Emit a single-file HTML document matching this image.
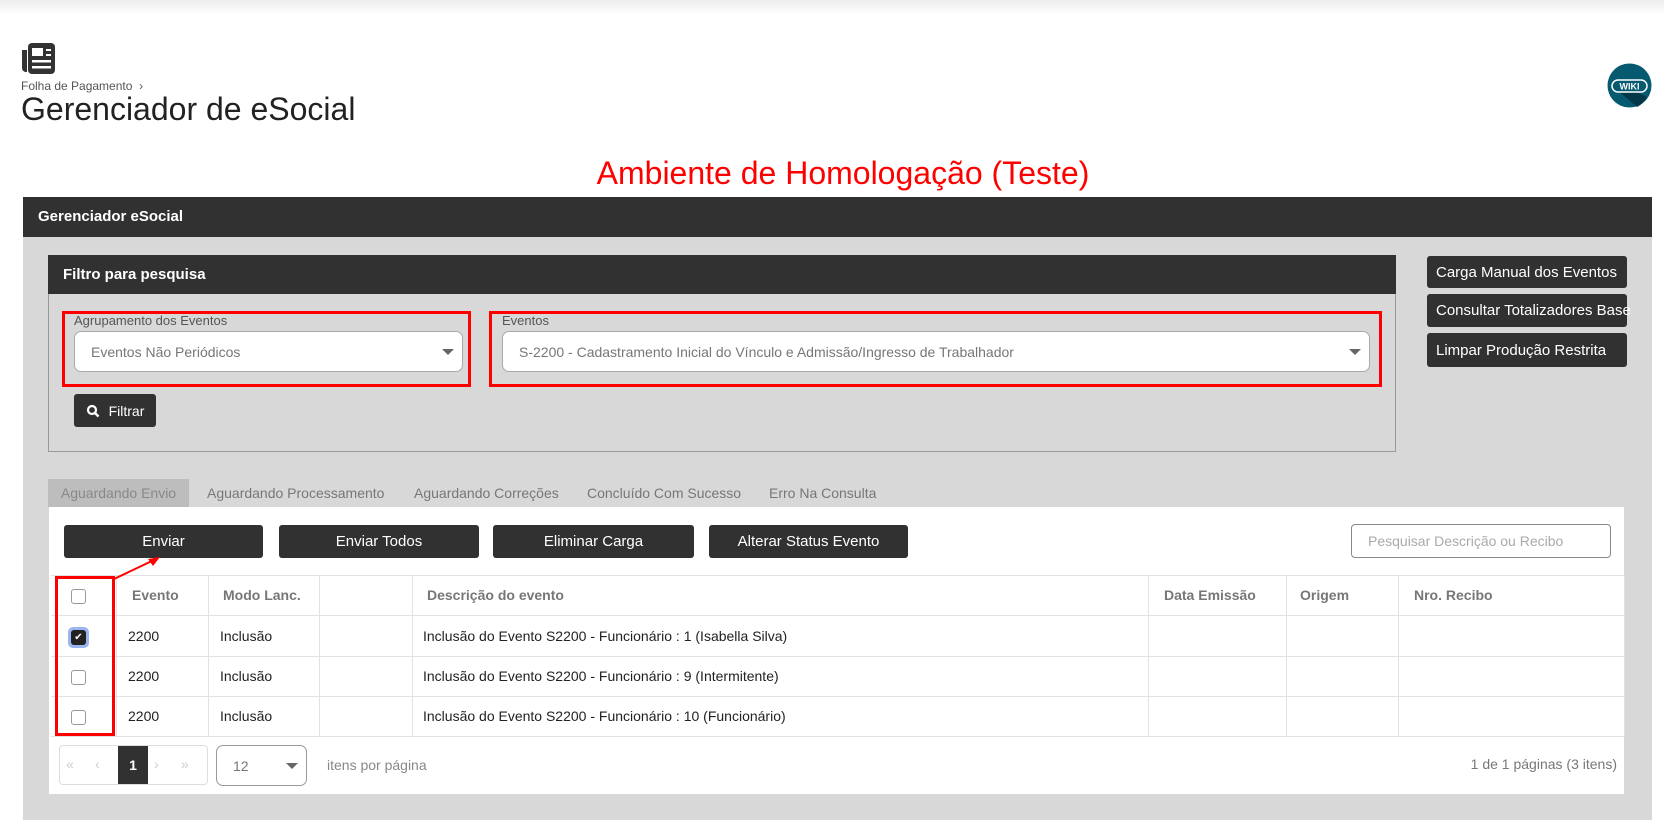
<!DOCTYPE html>
<html><head><meta charset="utf-8"><style>
*{box-sizing:border-box;margin:0;padding:0}
body{width:1664px;height:825px;overflow:hidden;background:#fff;font-family:"Liberation Sans",sans-serif;position:relative;color:#333}
.a{position:absolute}
.topshadow{left:0;top:0;width:1664px;height:14px;background:linear-gradient(#ececec,#fff)}
.btn{position:absolute;background:#313131;color:#fff;border-radius:3px;font-size:15px;display:flex;align-items:center;justify-content:center}
.rb{position:absolute;background:#313131;color:#fff;border-radius:3px;font-size:15px;padding-left:9px;display:flex;align-items:center;white-space:nowrap;overflow:visible}
.sel{position:absolute;background:#fff;border:1px solid #aaa;border-radius:7px;font-size:14px;color:#777;display:flex;align-items:center;padding-left:16px}
.caret{position:absolute;right:8px;top:50%;margin-top:-3px;width:0;height:0;border-left:6px solid transparent;border-right:6px solid transparent;border-top:6px solid #666}
.red{position:absolute;border:3px solid #f00}
.tab{position:absolute;top:479px;height:28px;font-size:14px;color:#777;line-height:28px}
.hl{position:absolute;left:51px;width:1573px;height:1px;background:#e2e2e2}
.vl{position:absolute;top:575px;width:1px;height:161px;background:#e2e2e2}
.th{position:absolute;top:575px;height:40px;line-height:40px;font-size:14px;color:#777;font-weight:bold}
.td{position:absolute;height:40px;line-height:40px;font-size:14px;color:#222}
.cb{position:absolute;left:71px;width:15px;height:15px;border:1px solid #999;border-radius:3px;background:#fff}
</style></head><body>
<div class="a topshadow"></div>
<svg class="a" style="left:20px;top:40px" width="36" height="36" viewBox="0 0 36 36">
<path d="M2 10h5v22h-1a4 4 0 0 1-4-4z" fill="#333"/>
<rect x="8" y="3" width="27" height="31" rx="4" fill="#333"/>
<rect x="12" y="8" width="11" height="8" fill="#fff"/><rect x="26" y="9" width="5" height="2" fill="#fff"/><rect x="26" y="14" width="5" height="2" fill="#fff"/><rect x="12" y="20" width="19" height="2.5" fill="#fff"/><rect x="12" y="26" width="19" height="2.5" fill="#fff"/>
</svg>
<div class="a" style="left:21px;top:79px;font-size:12px;color:#555">Folha de Pagamento &nbsp;›</div>
<div class="a" style="left:21px;top:91px;font-size:32px;color:#222">Gerenciador de eSocial</div>
<svg class="a" style="left:1607px;top:63px" width="45" height="45" viewBox="0 0 45 45"><circle cx="22.5" cy="22.5" r="22" fill="#055a70"/><path d="M40 34 L25 27 L8 25 L30 44 A22 22 0 0 0 40 34z" fill="#033848"/><rect x="5" y="17" width="35" height="12" rx="6" fill="#055a70" stroke="#fff" stroke-width="1.5"/><text x="22.5" y="26.5" font-size="9" font-weight="bold" fill="#fff" text-anchor="middle" font-family="Liberation Sans">WIKI</text></svg>
<div class="a" style="left:0;width:1664px;top:155px;text-align:center;font-size:32px;color:#f00;padding-left:22px">Ambiente de Homologação (Teste)</div>
<div class="a" style="left:23px;top:197px;width:1629px;height:40px;background:#313131;color:#fff;font-weight:bold;font-size:15px;line-height:40px;padding-left:15px">Gerenciador eSocial</div>
<div class="a" style="left:23px;top:237px;width:1629px;height:583px;background:#d8d8d8"></div>
<div class="a" style="left:48px;top:255px;width:1348px;height:197px;border:1px solid #999;border-top:none;background:#d8d8d8"></div>
<div class="a" style="left:48px;top:255px;width:1348px;height:39px;background:#313131;color:#fff;font-weight:bold;font-size:15px;line-height:39px;padding-left:15px">Filtro para pesquisa</div>
<div class="red" style="left:62px;top:311px;width:409px;height:76px"></div>
<div class="a" style="left:74px;top:313px;font-size:13px;color:#555">Agrupamento dos Eventos</div>
<div class="sel" style="left:74px;top:331px;width:389px;height:41px">Eventos Não Periódicos<div class="caret"></div></div>
<div class="red" style="left:489px;top:311px;width:893px;height:76px"></div>
<div class="a" style="left:502px;top:313px;font-size:13px;color:#555">Eventos</div>
<div class="sel" style="left:502px;top:331px;width:868px;height:41px">S-2200 - Cadastramento Inicial do Vínculo e Admissão/Ingresso de Trabalhador<div class="caret"></div></div>
<div class="btn" style="left:74px;top:394px;width:82px;height:33px;font-size:14px"><svg width="14" height="14" viewBox="0 0 14 14" style="margin-right:9px"><circle cx="6" cy="6" r="4" stroke="#fff" stroke-width="2.2" fill="none"/><path d="M9 9l3.5 3.5" stroke="#fff" stroke-width="2.5"/></svg>Filtrar</div>
<div class="rb" style="left:1427px;top:256px;width:200px;height:32px">Carga Manual dos Eventos</div>
<div class="rb" style="left:1427px;top:294px;width:200px;height:33px">Consultar Totalizadores Base</div>
<div class="rb" style="left:1427px;top:333px;width:200px;height:34px">Limpar Produção Restrita</div>
<div class="tab" style="left:48px;width:141px;background:#bdbdbd;text-align:center;color:#888">Aguardando Envio</div>
<div class="tab" style="left:207px">Aguardando Processamento</div>
<div class="tab" style="left:414px">Aguardando Correções</div>
<div class="tab" style="left:587px">Concluído Com Sucesso</div>
<div class="tab" style="left:769px">Erro Na Consulta</div>
<div class="a" style="left:49px;top:507px;width:1575px;height:287px;background:#fff"></div>
<div class="btn" style="left:64px;top:525px;width:199px;height:33px">Enviar</div>
<div class="btn" style="left:279px;top:525px;width:200px;height:33px">Enviar Todos</div>
<div class="btn" style="left:493px;top:525px;width:201px;height:33px">Eliminar Carga</div>
<div class="btn" style="left:709px;top:525px;width:199px;height:33px">Alterar Status Evento</div>
<div class="a" style="left:1351px;top:524px;width:260px;height:34px;border:1px solid #888;border-radius:4px;font-size:14px;color:#aaa;line-height:32px;padding-left:16px">Pesquisar Descrição ou Recibo</div>
<div class="hl" style="top:575px"></div><div class="hl" style="top:615px"></div><div class="hl" style="top:656px"></div><div class="hl" style="top:696px"></div><div class="hl" style="top:736px"></div>
<div class="vl" style="left:116px"></div><div class="vl" style="left:208px"></div><div class="vl" style="left:319px"></div><div class="vl" style="left:412px"></div><div class="vl" style="left:1148px"></div><div class="vl" style="left:1286px"></div><div class="vl" style="left:1398px"></div><div class="vl" style="left:1624px"></div>
<div class="th" style="left:132px">Evento</div><div class="th" style="left:223px">Modo Lanc.</div><div class="th" style="left:427px">Descrição do evento</div><div class="th" style="left:1164px">Data Emissão</div><div class="th" style="left:1300px">Origem</div><div class="th" style="left:1414px">Nro. Recibo</div>
<div class="cb" style="top:589px"></div>
<div class="a" style="left:68px;top:627px;width:21px;height:21px;border-radius:5px;background:#9bb5f0"></div>
<div class="a" style="left:71px;top:630px;width:15px;height:15px;border-radius:3px;background:#222;color:#fff;font-size:10px;line-height:15px;text-align:center">✔</div>
<div class="cb" style="top:670px"></div><div class="cb" style="top:710px"></div>
<div class="td" style="left:128px;top:616px">2200</div><div class="td" style="left:220px;top:616px">Inclusão</div><div class="td" style="left:423px;top:616px">Inclusão do Evento S2200 - Funcionário : 1 (Isabella Silva)</div>
<div class="td" style="left:128px;top:656px">2200</div><div class="td" style="left:220px;top:656px">Inclusão</div><div class="td" style="left:423px;top:656px">Inclusão do Evento S2200 - Funcionário : 9 (Intermitente)</div>
<div class="td" style="left:128px;top:696px">2200</div><div class="td" style="left:220px;top:696px">Inclusão</div><div class="td" style="left:423px;top:696px">Inclusão do Evento S2200 - Funcionário : 10 (Funcionário)</div>
<div class="red" style="left:55px;top:576px;width:60px;height:160px"></div>
<svg class="a" style="left:110px;top:555px" width="55" height="28"><path d="M4 24L44 5" stroke="#f00" stroke-width="2"/><path d="M50 2L38 4L43 11z" fill="#f00"/></svg>
<div class="a" style="left:59px;top:745px;width:149px;height:40px;border:1px solid #ddd;border-radius:4px;font-size:14px;color:#ccc">
<span class="a" style="left:6px;top:10px">«</span><span class="a" style="left:35px;top:10px">‹</span>
<span class="a" style="left:58px;top:0;width:30px;height:38px;background:#313131;color:#fff;text-align:center;line-height:38px;font-weight:bold">1</span>
<span class="a" style="left:94px;top:10px">›</span><span class="a" style="left:121px;top:10px">»</span></div>
<div class="sel" style="left:216px;top:745px;width:91px;height:41px;border-color:#999">12<div class="caret"></div></div>
<div class="a" style="left:327px;top:757px;font-size:14px;color:#888">itens por página</div>
<div class="a" style="right:47px;top:756px;font-size:14px;color:#777">1 de 1 páginas (3 itens)</div>
</body></html>
